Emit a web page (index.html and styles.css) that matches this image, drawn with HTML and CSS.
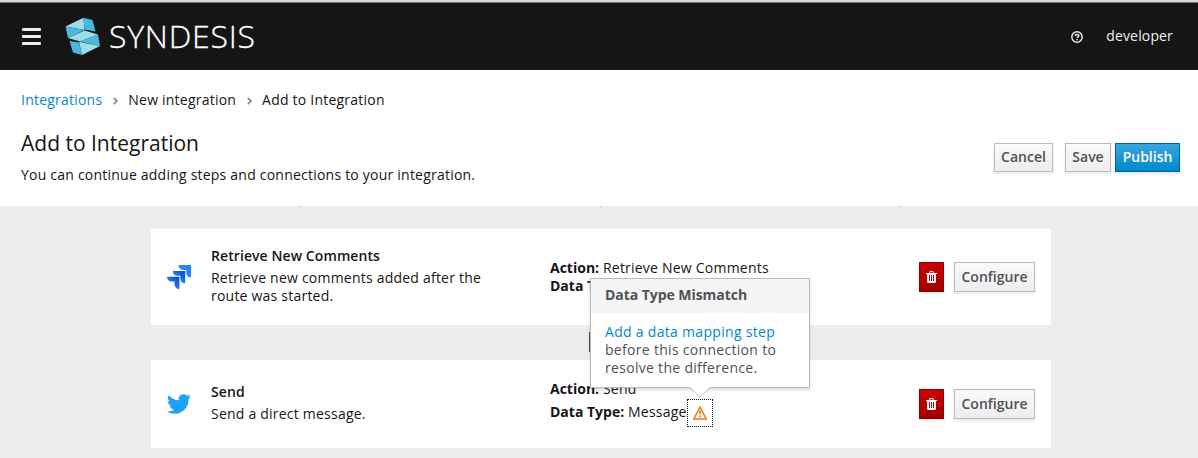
FILE: index.html
```
<!DOCTYPE html>
<html lang="en">
<head>
<meta charset="utf-8">
<title>Syndesis</title>
<link rel="stylesheet" href="styles.css">
</head>
<body>
<header class="masthead">
  <div class="menu"><span></span><span></span><span></span></div>
  <svg class="logo" width="36" height="39" viewBox="0 0 36 39">
    <path fill="#9bdde9" d="M0.5 9.5 18.500 0.800 19.500 13Z"/>
    <path fill="#4ab9de" d="M18.500 0.800 27.500 3 30.500 14.500 19.500 12.500Z"/>
    <path fill="#4ab9de" d="M0.5 9.5 19.500 13 3 21Z"/>
    <path fill="#9bdde9" d="M3 21 19.500 13.500 33 17.500 15 24.500Z"/>
    <path fill="#4ab9de" d="M33 17.500 35 29 15 24.500Z"/>
    <path fill="#9bdde9" d="M14 24.800 35 29 17 38Z"/>
    <path fill="#4ab9de" d="M4.500 24 14 25.500 17 38 8 35.500Z"/>
  </svg>
  <span class="wordmark">SYNDESIS</span>
  <svg class="help" width="12" height="12" viewBox="0 0 12 12" fill="none" stroke="#e8e8e8">
    <circle cx="6" cy="6" r="5.200" stroke-width="1.500"/>
    <path stroke-width="1.500" d="M4.200 4.900C4.200 2.900 7.800 2.900 7.800 4.800 7.800 5.900 6.100 5.900 6.100 7.100M6.100 8V9.300"/>
  </svg>
  <span class="user">developer</span>
</header>
<section class="page-head">
  <nav class="crumbs">
    <a class="link">Integrations</a>
    <svg class="chev" width="5" height="8" viewBox="0 0 5 8"><path d="M.8.8 4 4 .8 7.200"/></svg>
    <span>New integration</span>
    <svg class="chev" width="5" height="8" viewBox="0 0 5 8"><path d="M.8.8 4 4 .8 7.200"/></svg>
    <span>Add to Integration</span>
  </nav>
  <div class="title-row">
    <div>
      <h1>Add to Integration</h1>
      <p class="subtitle">You can continue adding steps and connections to your integration.</p>
    </div>
    <div class="actions">
      <button class="btn cancel">Cancel</button>
      <button class="btn save">Save</button>
      <button class="btn primary publish">Publish</button>
    </div>
  </div>
</section>
<main class="steps">
  <div class="ticks"><i></i><i></i><i></i></div>
  <article class="card first">
    <svg class="brand" width="24" height="24" viewBox="0 0 24 24">
      <defs><linearGradient id="j" x1="1" y1="0" x2="0.300" y2="0.800"><stop offset="0.150" stop-color="#0a52cc"/><stop offset="0.900" stop-color="#2684ff"/></linearGradient></defs>
      <path fill="#2684ff" d="M11.500 0H24V12.500C21 12.500 19.200 10.500 19.200 8V4.900H16.200C13.500 4.900 11.500 3 11.500 0Z"/>
      <path fill="url(#j)" d="M5.800 6H18.200V18.200C15.200 18.200 13.300 16.300 13.300 13.700V10.800H10.500C7.800 10.800 5.800 9 5.800 6Z"/>
      <path fill="url(#j)" d="M0 11.700H12.400V24C9.500 24 7.500 22 7.500 19.500V16.600H4.700C2 16.600 0 14.700 0 11.700Z"/>
    </svg>
    <div class="about"><h2>Retrieve New Comments</h2><p>Retrieve new comments added after the route was started.</p></div>
    <div class="details"><p><b>Action:</b> Retrieve New Comments</p><p><b>Data Type:</b></p></div>
    <button class="btn danger"><svg width="11" height="12" viewBox="0 0 11 12"><path fill="#fff" fill-rule="evenodd" d="M0 2H3L4 0H7L8 2H11V3H10V11L9 12H2L1 11V3H0ZM4 2H7L6.500 1H4.500ZM3 4V10H4V4ZM5 4V10H6V4ZM7 4V10H8V4Z"/></svg></button>
    <button class="btn configure">Configure</button>
  </article>
  <div class="between"><button class="insert"></button></div>
  <article class="card second">
    <svg class="brand" width="24" height="24" viewBox="0 0 24 24"><path fill="#1da1f2" d="M23.950 4.570a10 10 0 0 1-2.820.770 4.960 4.960 0 0 0 2.160-2.720c-.95.550-2 .960-3.120 1.180a4.920 4.920 0 0 0-8.380 4.480C7.690 8.090 4.070 6.130 1.640 3.160a4.820 4.820 0 0 0-.670 2.480c0 1.710.870 3.210 2.190 4.100a4.900 4.900 0 0 1-2.230-.620v.060a4.920 4.920 0 0 0 3.950 4.830 5 5 0 0 1-2.210.080 4.940 4.940 0 0 0 4.600 3.420A9.870 9.870 0 0 1 0 19.540a13.990 13.990 0 0 0 7.550 2.210c9.050 0 14-7.500 14-13.980 0-.210 0-.420-.020-.630a9.940 9.940 0 0 0 2.420-2.570z"/></svg>
    <div class="about"><h2>Send</h2><p>Send a direct message.</p></div>
    <div class="details"><p><b>Action:</b> Send</p>
      <div class="type-row"><span class="type"><b>Data Type:</b> Message</span>
        <a class="warn"><svg width="14" height="14" viewBox="0 0 14 14"><path fill="none" stroke="#ec7a08" stroke-width="1.600" stroke-linejoin="round" d="M7 1 13.200 13H.8Z"/><path fill="#ec7a08" d="M6 4.700H8L7.700 8.800H6.300ZM6.200 9.700H7.800V11.300H6.200Z"/></svg>
          <div class="popover">
            <h3>Data Type Mismatch</h3>
            <p><span class="link">Add a data mapping step</span><br>before this connection to<br>resolve the difference.</p>
            <svg class="arrow" width="22" height="11" viewBox="0 0 22 11"><path fill="#fff" d="M0 0H22L11 10Z"/><path fill="none" stroke="#bbb" d="M.5.5 11 10 21.500.5"/></svg>
          </div>
        </a>
      </div>
    </div>
    <button class="btn danger"><svg width="11" height="12" viewBox="0 0 11 12"><path fill="#fff" fill-rule="evenodd" d="M0 2H3L4 0H7L8 2H11V3H10V11L9 12H2L1 11V3H0ZM4 2H7L6.500 1H4.500ZM3 4V10H4V4ZM5 4V10H6V4ZM7 4V10H8V4Z"/></svg></button>
    <button class="btn configure">Configure</button>
  </article>
</main>
</body>
</html>
```
FILE: styles.css
```
* { box-sizing: border-box; }
body { margin: 0; height: 458px; overflow: hidden; background: #ececec; color: #151515; font: 14px/18px "Open Sans", sans-serif; letter-spacing: .22px; }
h1, h2, h3, p { margin: 0; font-weight: 400; }
b { font-weight: 700; letter-spacing: 0; }
.link { color: #0088ce; }
.masthead { height: 70px; border-top: 2px solid #d5d7d8; box-shadow: inset 0 1px #777; background: #151515; color: #f0f0f0; display: flex; align-items: center; padding: 0 25px 0 22px; }
.menu { width: 19px; display: grid; gap: 4px; }
.menu span { height: 3px; background: #eee; border-radius: 1px; }
.logo { margin-left: 24px; margin-top: 1px; }
.wordmark { margin-left: 8px; font: 300 32px/40px "Open Sans", sans-serif; letter-spacing: .75px; color: #fff; -webkit-text-stroke: .3px #fff; }
.help { margin-left: auto; margin-top: 1px; }
.user { margin-left: 23px; letter-spacing: .15px; }
.page-head { height: 136px; background: #fff; padding: 21px 18px 0 21px; }
.crumbs { display: flex; align-items: center; }
.chev { margin: 1px 10px 0 11px; }
.chev path { fill: none; stroke: #8b8d8f; stroke-width: 1.8; }
.title-row { display: flex; justify-content: space-between; margin-top: 21px; }
h1 { font-size: 21px; line-height: 26px; letter-spacing: 0; }
.subtitle { margin-top: 10px; }
.actions { display: flex; margin-top: 13px; }
.btn { height: 29px; padding: 0 0 1px; border: 1px solid #bbb; background: linear-gradient(#fafafa, #ededed); color: #4d5258; box-shadow: 0 2px 3px rgba(3, 3, 3, .1); font: 600 14px/18px "Open Sans", sans-serif; }
.cancel { width: 59px; margin-right: 12px; }
.save { width: 46px; margin-right: 4px; }
.publish { width: 65px; }
.primary { background: linear-gradient(#39a5dc, #0088ce); border-color: #00659c; color: #fff; }
.steps { width: 900px; margin: 0 auto 0 151px; }
.ticks { height: 23px; display: flex; gap: 299px; padding-left: 149px; }
.ticks i { width: 1px; height: 1px; background: #bbb; }
.card { background: #fff; display: flex; align-items: center; padding: 0 16px; }
.first { height: 96px; }
.second { height: 88px; }
.brand { flex: none; }
.about { width: 290px; margin-left: 20px; padding-bottom: 2px; }
h2 { font-size: 14px; font-weight: 600; margin-bottom: 4px; letter-spacing: .08px; }
.details { width: 369px; margin-left: 49px; }
.second .details > p { margin-top: -1px; margin-bottom: 1px; }
.type-row { height: 28px; display: flex; align-items: center; white-space: nowrap; }
.type { width: 136px; margin-top: -2px; }
.card .btn { height: 30px; flex: none; padding: 0; }
.card .danger { width: 25px; margin-right: 10px; display: grid; place-items: center; background: linear-gradient(#c00, #a30000); border-color: #8b0000; }
.configure { width: 81px; }
.between { height: 35px; padding: 7px 0 0 438px; }
.insert { display: block; width: 20px; height: 20px; padding: 0; background: #39a5dc; border: 1px solid #4d5258; }
.warn { position: relative; width: 26px; height: 28px; margin-left: 1px; border: 1px dotted #151515; display: grid; place-items: center; }
.popover { position: absolute; left: -98px; top: -122px; width: 220px; height: 110px; background: #fff; border: 1px solid #bbb; box-shadow: 0 2px 3px rgba(3, 3, 3, .15); color: #4d5258; white-space: nowrap; }
.popover h3 { height: 34px; padding: 7px 14px; background: #f5f5f5; font-size: 14px; font-weight: 700; line-height: 18px; letter-spacing: -.05px; }
.popover p { padding: 10px 14px; letter-spacing: .3px; }
.arrow { position: absolute; left: 98px; top: 108px; }
```
